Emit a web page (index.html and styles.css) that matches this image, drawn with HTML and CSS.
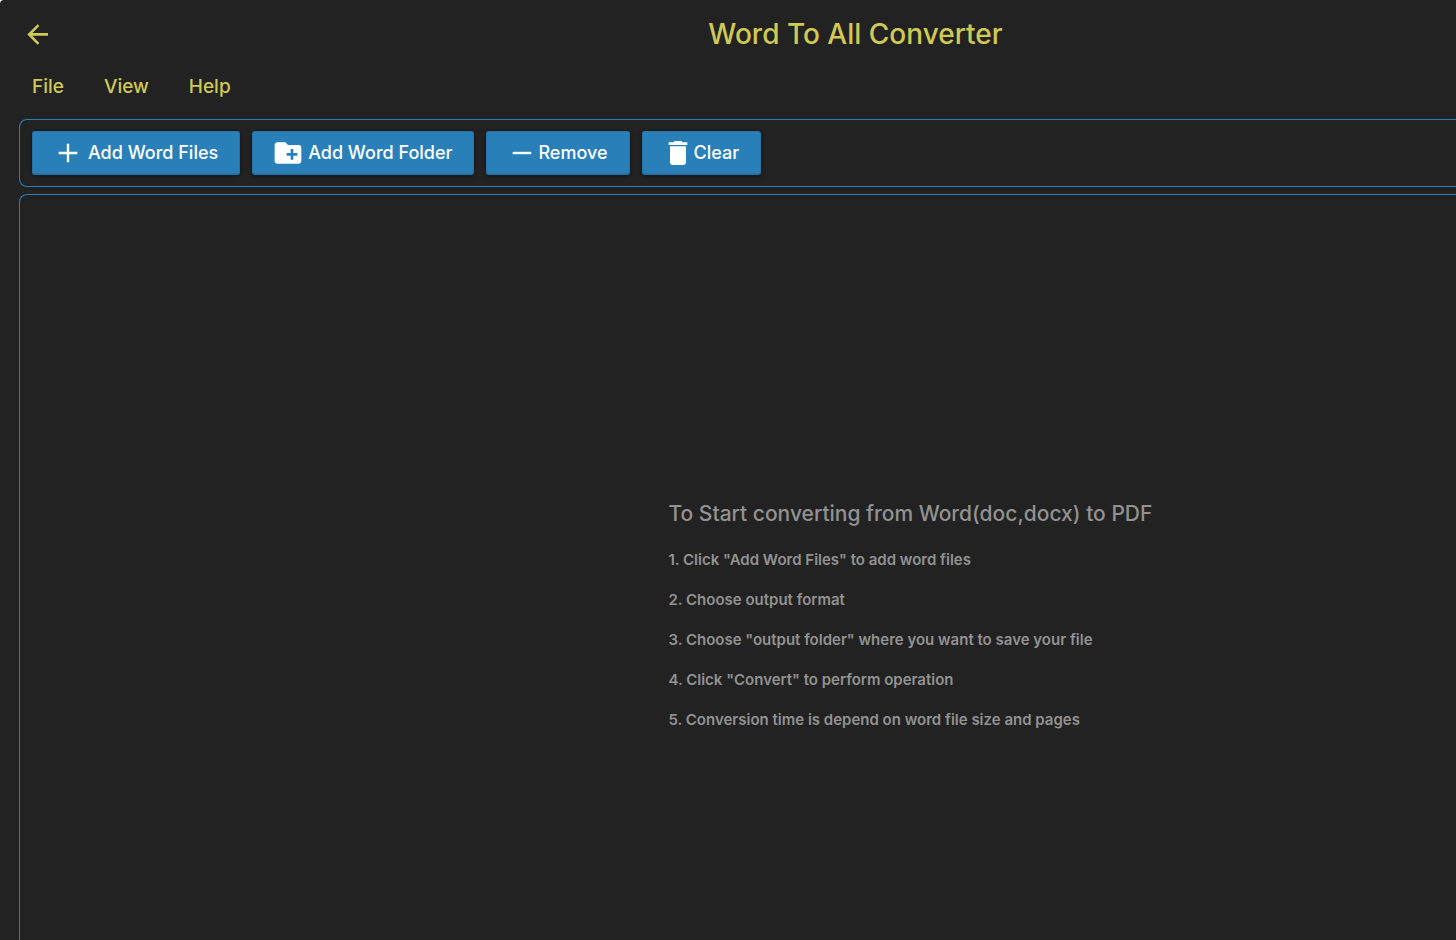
FILE: index.html
```
<!DOCTYPE html>
<html lang="en">
<head>
    <meta charset="UTF-8">
    <title>Word To All Converter</title>
    <link rel="stylesheet" href="styles.css">
</head>
<body>
    <div class="app-window">
        <header class="title-bar">
            <button type="button" class="back-btn" aria-label="Back">
                <svg class="icon" viewBox="0 0 24 24"><path d="M19.5 11.2H7.8L13 6l-1.3-1.3L4 12.3l7.7 7.7 1.3-1.3-5.200-5.400H19.500v-2.100z"/></svg>
            </button>
            <h1 class="app-title">Word To All Converter</h1>
        </header>

        <nav class="menu-bar">
            <a href="#file">File</a>
            <a href="#view">View</a>
            <a href="#help">Help</a>
        </nav>

        <div class="toolbar">
            <button type="button" class="tool-btn spaced">
                <svg class="icon" viewBox="0 0 24 24"><path d="M19 12.9h-6.1V19h-1.8v-6.1H5v-1.8h6.1V5h1.8v6.1H19z"/></svg>
                Add Word Files
            </button>
            <button type="button" class="tool-btn spaced">
                <svg class="icon" viewBox="0 0 24 24"><path d="M20 6h-8l-2-2H4c-1.11 0-1.99.89-1.99 2L2 18c0 1.11.89 2 2 2h16c1.11 0 2-.89 2-2V8c0-1.11-.89-2-2-2zm-1 8h-3v3h-2v-3h-3v-2h3V9h2v3h3v2z"/></svg>
                Add Word Folder
            </button>
            <button type="button" class="tool-btn">
                <svg class="icon" viewBox="0 0 24 24"><path d="M19 12.9H5v-1.8h14z"/></svg>
                Remove
            </button>
            <button type="button" class="tool-btn">
                <svg class="icon" viewBox="0 0 24 24"><path d="M6 19c0 1.1.9 2 2 2h8c1.1 0 2-.9 2-2V7H6v12zM19 4h-3.5l-1-1h-5l-1 1H5v2h14V4z"/></svg>
                Clear
            </button>
        </div>

        <main class="file-panel">
            <div class="instructions">
                <h2>To Start converting from Word(doc,docx) to PDF</h2>
                <p>1. Click "Add Word Files" to add word files</p>
                <p>2. Choose output format</p>
                <p>3. Choose "output folder" where you want to save your file</p>
                <p>4. Click "Convert" to perform operation</p>
                <p>5. Conversion time is depend on word file size and pages</p>
            </div>
        </main>
    </div>
</body>
</html>
```
FILE: styles.css
```
:root {
    --background-color: #222222;
    --accent-color: #d0c954;
    --primary-color: #2980b9;
    --muted-color: #929292;
}

* {
    margin: 0;
    padding: 0;
    box-sizing: border-box;
}

body {
    font-family: Inter, 'Liberation Sans', sans-serif;
    font-weight: 500;
    background-color: white;
}

.app-window {
    display: flex;
    flex-direction: column;
    min-height: 100vh;
    padding-left: 19px;
    background-color: var(--background-color);
    border-radius: 4px 0 0 0;
}

.icon {
    width: 32px;
    height: 32px;
    flex-shrink: 0;
    fill: currentColor;
}

.title-bar {
    display: flex;
    align-items: center;
    height: 68px;
    padding-left: 3px;
}

.back-btn {
    display: flex;
    border: none;
    background: none;
    color: var(--accent-color);
    cursor: pointer;
}

.app-title {
    flex: 1;
    padding-left: 14%;
    text-align: center;
    color: var(--accent-color);
    font-size: 28px;
    font-weight: 500;
}

.menu-bar {
    display: flex;
    gap: 40px;
    height: 51px;
    padding: 7px 13px;
}

.menu-bar a {
    color: var(--accent-color);
    font-size: 19px;
    line-height: 24px;
    text-decoration: none;
}

.toolbar {
    display: flex;
    gap: 12px;
    padding: 11px 12px;
    border: 1px solid var(--primary-color);
    border-right: none;
    border-radius: 8px 0 0 8px;
}

.tool-btn {
    display: flex;
    align-items: center;
    height: 44px;
    padding: 0 21px 0 19px;
    border: 1px solid #2573a7;
    border-bottom-width: 2px;
    border-radius: 3px;
    background-color: var(--primary-color);
    box-shadow: 0 1px 4px rgba(0, 0, 0, 0.4);
    color: white;
    font-family: inherit;
    font-size: 18px;
    font-weight: 500;
    white-space: nowrap;
    cursor: pointer;
}

.tool-btn.spaced {
    gap: 4px;
}

.tool-btn:hover {
    background-color: #3498db;
}

.file-panel {
    display: flex;
    flex: 1;
    align-items: center;
    justify-content: center;
    margin-top: 7px;
    padding-top: 103px;
    padding-left: 24%;
    border: 1px solid var(--primary-color);
    border-right: none;
    border-bottom: none;
    border-radius: 8px 0 0 0;
}

.instructions {
    color: var(--muted-color);
}

.instructions h2 {
    margin-bottom: 10px;
    font-size: 21px;
    font-weight: 500;
    line-height: 32px;
}

.instructions p {
    font-size: 15px;
    font-weight: 600;
    line-height: 40px;
}
```
